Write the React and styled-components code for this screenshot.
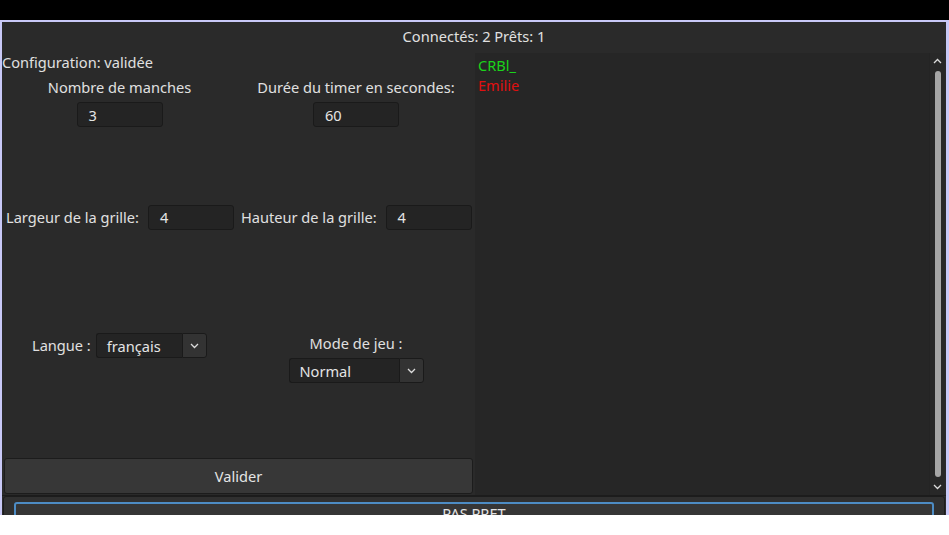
import styled, { createGlobalStyle } from 'styled-components'

const GlobalStyle = createGlobalStyle`
    html, body {
        margin: 0;
        padding: 0;
        background: #ffffff;
        overflow: hidden;
    }
    body {
        font-family: "Noto Sans", "DejaVu Sans", sans-serif;
        font-size: 14.6px;
        color: #dcdcdc;
    }
`

const Screen = styled.div`
    width: 949px;
    height: 515px;
    padding-top: 20px;
    box-sizing: border-box;
    background: #000000;
    overflow: hidden;
`

const Window = styled.div`
    height: 495px;
    box-sizing: border-box;
    border-top: 2px solid #c8c8f6;
    border-left: 2px solid #c8c8f6;
    border-right: 3px solid #c8c8f6;
    background: #2a2a2a;
    display: flex;
    flex-direction: column;
`

const Header = styled.div`
    flex-shrink: 0;
    height: 31px;
    box-sizing: border-box;
    padding-bottom: 3px;
    display: flex;
    align-items: center;
    justify-content: center;
    color: #e0e0e0;
`

const Body = styled.div`
    flex-shrink: 0;
    display: flex;
    height: 442px;
`

const LeftPanel = styled.div`
    width: 473px;
    display: flex;
    flex-direction: column;
`

const ConfigLabel = styled.div`
    height: 18px;
    line-height: 18px;
    color: #e0e0e0;
`

const Grid = styled.div`
    display: grid;
    grid-template-columns: 235px 238px;
    height: ${p => p.$h}px;
    margin-top: ${p => p.$mt}px;
`

const StackCell = styled.div`
    display: flex;
    flex-direction: column;
    align-items: center;
    gap: ${p => p.$gap}px;
    padding-top: ${p => p.$pt || 0}px;
`

const InlineCell = styled.div`
    display: flex;
    align-items: ${p => p.$align || 'center'};
    gap: ${p => p.$gap}px;
    padding-left: ${p => p.$pl || 0}px;
`

const Label = styled.span`
    line-height: ${p => p.$lh || 18}px;
    color: #e0e0e0;
    white-space: nowrap;
`

const Field = styled.div`
    width: 86px;
    height: 25px;
    box-sizing: border-box;
    background: #242424;
    border: 1px solid #1a1a1a;
    border-radius: 3px;
    padding-left: 11px;
    display: flex;
    align-items: center;
    color: #e4e4e4;
`

const Combo = styled.div`
    display: flex;
    height: 25px;
`

const ComboText = styled.div`
    width: ${p => p.$w}px;
    box-sizing: border-box;
    background: #242424;
    border: 1px solid #1a1a1a;
    border-right: none;
    border-radius: 3px 0 0 3px;
    padding-left: 10px;
    display: flex;
    align-items: center;
    color: #e4e4e4;
`

const ComboButton = styled.div`
    width: 25px;
    box-sizing: border-box;
    background: #333333;
    border: 1px solid #1a1a1a;
    border-radius: 0 3px 3px 0;
    display: flex;
    align-items: center;
    justify-content: center;
`

const Button = styled.div`
    margin: 75px 0 0 2px;
    width: 469px;
    height: 36px;
    box-sizing: border-box;
    background: #373737;
    border: 1px solid #1c1c1c;
    border-radius: 3px;
    display: flex;
    align-items: center;
    justify-content: center;
    color: #e4e4e4;
`

const ListPanel = styled.div`
    flex: 1;
    display: flex;
    background: #262626;
    margin-right: 1px;
`

const List = styled.div`
    flex: 1;
    padding: 2px 0 0 3px;
`

const Player = styled.div`
    line-height: 20px;
    color: ${p => p.$color};
`

const Scrollbar = styled.div`
    width: 15px;
    display: flex;
    flex-direction: column;
    align-items: center;
    border-left: 1px solid #242424;
    background: #282828;
`

const ScrollArrow = styled.div`
    height: 16px;
    display: flex;
    align-items: center;
    justify-content: center;
`

const Handle = styled.div`
    flex: 1;
    width: 6px;
    margin: 2px 0;
    background: #a6a6a6;
    border-radius: 3px;
`

const Footer = styled.div`
    flex: 1;
    min-height: 0;
    overflow: hidden;
    border-top: 1px solid #1c1c1c;
    padding: 0 1px;
    background: #2a2a2a;
`

const FooterFrame = styled.div`
    height: 60px;
    box-sizing: border-box;
    background: #303030;
    border: 1px solid #1c1c1c;
    border-radius: 3px;
    padding: 5px 10px 0 10px;
`

const ReadyButton = styled.div`
    height: 40px;
    box-sizing: border-box;
    border: 2px solid #4d8cc4;
    border-radius: 3px;
    background: #363636;
    text-align: center;
    line-height: 18px;
    color: #e4e4e4;
`

const Chevron = ({ up, color = '#dcdcdc' }) => (
    <svg width="9" height="6" viewBox="0 0 9 6">
        <path
            d={up ? 'M1 5 L4.5 1.5 L8 5' : 'M1 1 L4.5 4.5 L8 1'}
            fill="none"
            stroke={color}
            strokeWidth="1.3"
        />
    </svg>
)

export default function App() {
    return (
        <Screen>
            <GlobalStyle />
            <Window>
                <Header>Connectés: 2 Prêts: 1</Header>
                <Body>
                    <LeftPanel>
                        <ConfigLabel>Configuration: validée</ConfigLabel>
                        <Grid $h={52} $mt={7}>
                            <StackCell $gap={6}>
                                <Label>Nombre de manches</Label>
                                <Field>3</Field>
                            </StackCell>
                            <StackCell $gap={6}>
                                <Label>Durée du timer en secondes:</Label>
                                <Field>60</Field>
                            </StackCell>
                        </Grid>
                        <Grid $h={26} $mt={74}>
                            <InlineCell $gap={9} $pl={4}>
                                <Label>Largeur de la grille:</Label>
                                <Field>4</Field>
                            </InlineCell>
                            <InlineCell $gap={9} $pl={4}>
                                <Label>Hauteur de la grille:</Label>
                                <Field>4</Field>
                            </InlineCell>
                        </Grid>
                        <Grid $h={50} $mt={103}>
                            <InlineCell $gap={5} $pl={30} $align="flex-start">
                                <Label $lh={25}>Langue :</Label>
                                <Combo>
                                    <ComboText $w={86}>français</ComboText>
                                    <ComboButton><Chevron /></ComboButton>
                                </Combo>
                            </InlineCell>
                            <StackCell $gap={6} $pt={1}>
                                <Label>Mode de jeu :</Label>
                                <Combo>
                                    <ComboText $w={110}>Normal</ComboText>
                                    <ComboButton><Chevron /></ComboButton>
                                </Combo>
                            </StackCell>
                        </Grid>
                        <Button>Valider</Button>
                    </LeftPanel>
                    <ListPanel>
                        <List>
                            <Player $color="#1bd41b">CRBl_</Player>
                            <Player $color="#e01010">Emilie</Player>
                        </List>
                        <Scrollbar>
                            <ScrollArrow><Chevron up /></ScrollArrow>
                            <Handle />
                            <ScrollArrow><Chevron /></ScrollArrow>
                        </Scrollbar>
                    </ListPanel>
                </Body>
                <Footer>
                    <FooterFrame>
                        <ReadyButton>PAS PRET</ReadyButton>
                    </FooterFrame>
                </Footer>
            </Window>
        </Screen>
    )
}
